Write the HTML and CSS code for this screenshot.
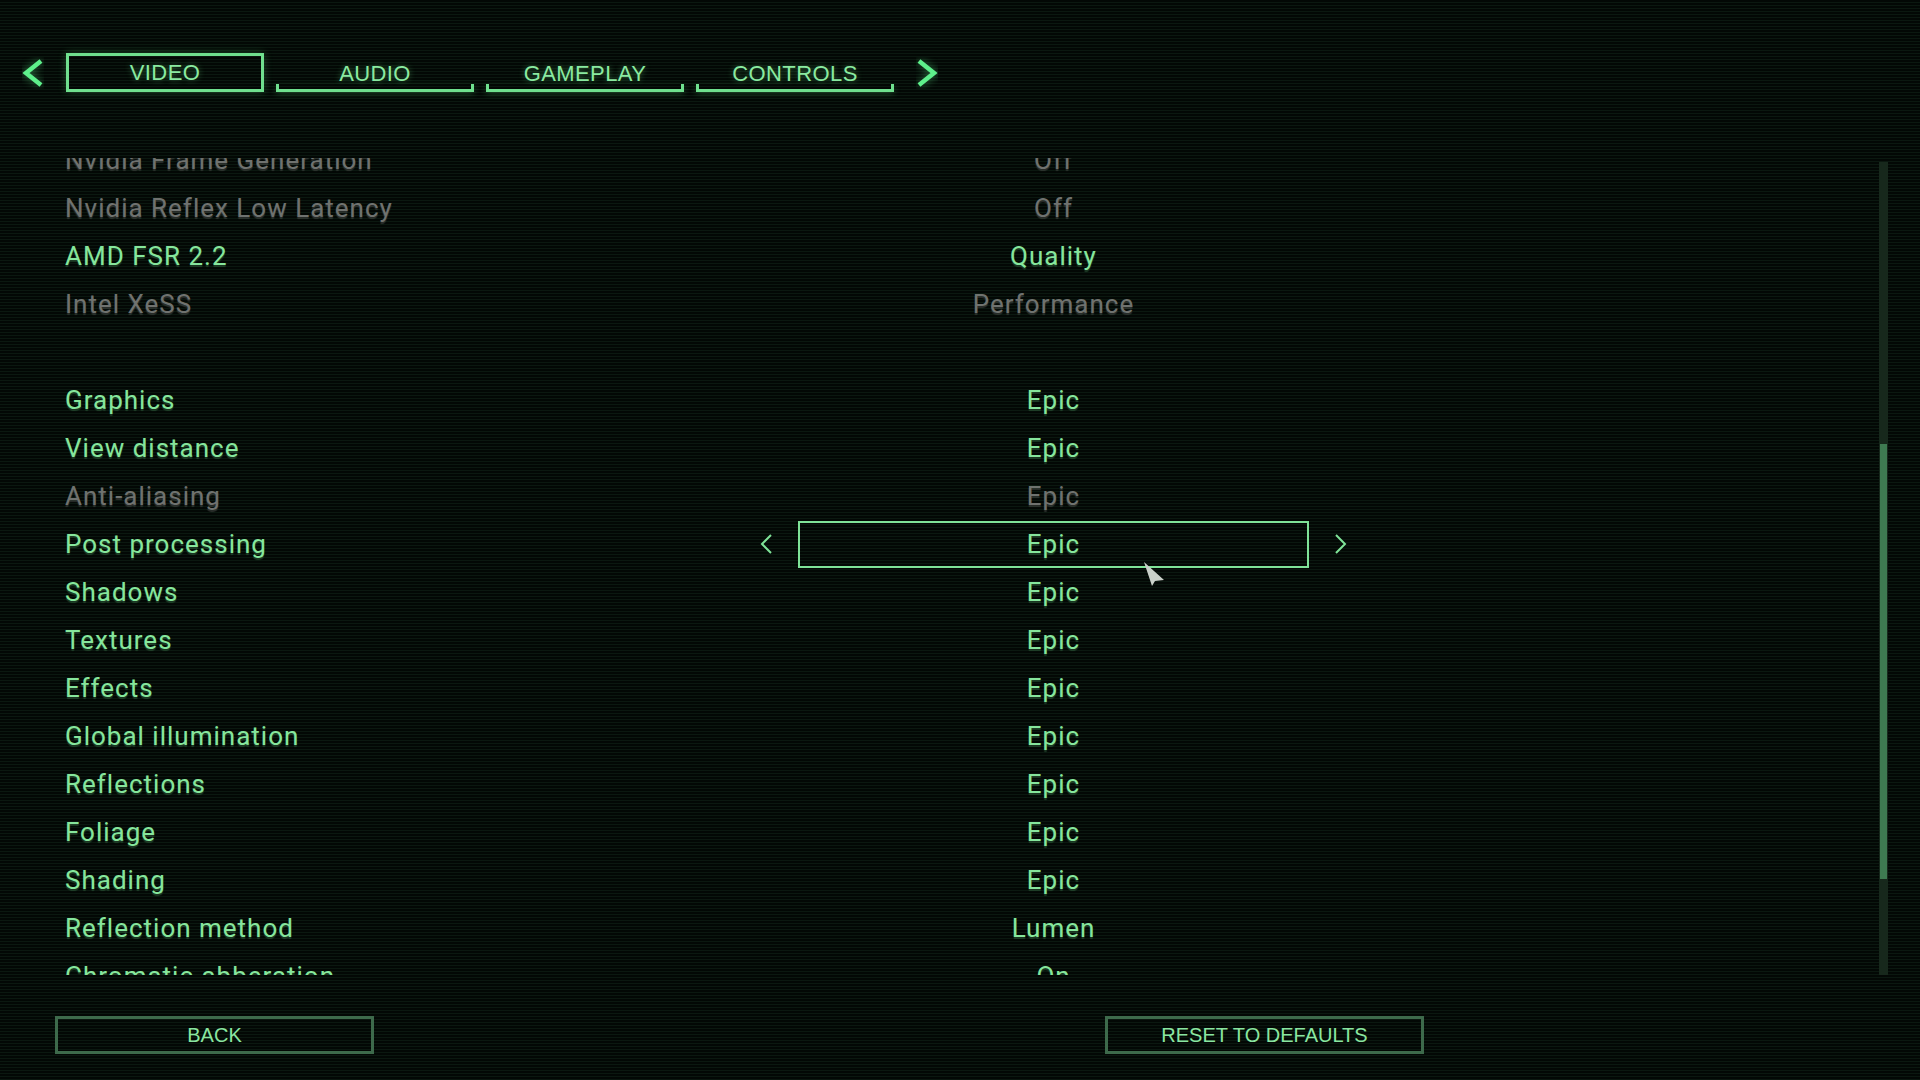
FILE: index.html
```html
<!DOCTYPE html>
<html lang="en">
  <head>
    <meta charset="UTF-8" />
    <meta name="viewport" content="width=device-width, initial-scale=1.0" />
    <title>Settings - Video</title>
    <link rel="stylesheet" href="styles.css">
  </head>
  <body>
    <nav class="tabbar">
      <span class="tab-arrow">
        <svg width="22" height="32" viewBox="0 0 22 32"><polyline points="19,4 4,16 19,28" /></svg>
      </span>
      <div class="tab active">VIDEO</div>
      <div class="tab">AUDIO</div>
      <div class="tab">GAMEPLAY</div>
      <div class="tab">CONTROLS</div>
      <span class="tab-arrow">
        <svg width="22" height="32" viewBox="0 0 22 32"><polyline points="3,4 18,16 3,28" /></svg>
      </span>
    </nav>

    <div class="settings">
      <div class="settings-list">
        <div class="rows">
          <div class="row disabled"><span class="label">Nvidia Frame Generation</span><div class="value"><span class="value-text">Off</span></div></div>
          <div class="row disabled"><span class="label">Nvidia Reflex Low Latency</span><div class="value"><span class="value-text">Off</span></div></div>
          <div class="row"><span class="label">AMD FSR 2.2</span><div class="value"><span class="value-text">Quality</span></div></div>
          <div class="row disabled"><span class="label">Intel XeSS</span><div class="value"><span class="value-text">Performance</span></div></div>
          <div class="row spacer"></div>
          <div class="row"><span class="label">Graphics</span><div class="value"><span class="value-text">Epic</span></div></div>
          <div class="row"><span class="label">View distance</span><div class="value"><span class="value-text">Epic</span></div></div>
          <div class="row disabled"><span class="label">Anti-aliasing</span><div class="value"><span class="value-text">Epic</span></div></div>
          <div class="row selected">
            <span class="label">Post processing</span>
            <div class="value">
              <svg class="step" width="12" height="22" viewBox="0 0 12 22"><polyline points="11,2 2,11 11,20" /></svg>
              <span class="value-text">Epic</span>
              <svg class="step" width="12" height="22" viewBox="0 0 12 22"><polyline points="1,2 10,11 1,20" /></svg>
            </div>
          </div>
          <div class="row"><span class="label">Shadows</span><div class="value"><span class="value-text">Epic</span></div></div>
          <div class="row"><span class="label">Textures</span><div class="value"><span class="value-text">Epic</span></div></div>
          <div class="row"><span class="label">Effects</span><div class="value"><span class="value-text">Epic</span></div></div>
          <div class="row"><span class="label">Global illumination</span><div class="value"><span class="value-text">Epic</span></div></div>
          <div class="row"><span class="label">Reflections</span><div class="value"><span class="value-text">Epic</span></div></div>
          <div class="row"><span class="label">Foliage</span><div class="value"><span class="value-text">Epic</span></div></div>
          <div class="row"><span class="label">Shading</span><div class="value"><span class="value-text">Epic</span></div></div>
          <div class="row"><span class="label">Reflection method</span><div class="value"><span class="value-text">Lumen</span></div></div>
          <div class="row"><span class="label">Chromatic abberation</span><div class="value"><span class="value-text">On</span></div></div>
        </div>
      </div>
      <div class="scrollbar"><div class="thumb"></div></div>
    </div>

    <footer class="footer">
      <button class="btn">BACK</button>
      <button class="btn reset">RESET TO DEFAULTS</button>
    </footer>

    <!-- mouse pointer -->
    <svg class="pointer" width="26" height="28" viewBox="0 0 26 28">
      <polygon points="1,1 21,19 12,20 9,25" />
    </svg>
  </body>
</html>
```

FILE: styles.css
```css
body {
  margin: 0;
  width: 1920px;
  height: 1080px;
  overflow: hidden;
  font-family: Roboto, "Liberation Sans", sans-serif;
  color: #86e69c;
  background-color: #050c07;
  background-image: repeating-linear-gradient(
    to bottom,
    #030805 0px,
    #030805 2px,
    #0b1810 2px,
    #0b1810 3px
  );
}

/* Top tabs */
.tabbar {
  display: flex;
  align-items: center;
  gap: 12px;
  height: 39px;
  margin-top: 53px;
  padding-left: 22px;
}
.tab-arrow {
  display: flex;
  width: 22px;
  justify-content: center;
}
.tab-arrow:first-child {
  margin-right: 10px;
}
.tab-arrow:last-child {
  margin-left: 10px;
}
.tab-arrow svg polyline {
  fill: none;
  stroke: #5ef08b;
  stroke-width: 4.5;
  filter: drop-shadow(0 0 4px rgba(94, 240, 139, 0.5));
}
.tab {
  position: relative;
  box-sizing: border-box;
  width: 198px;
  height: 39px;
  display: flex;
  align-items: center;
  justify-content: center;
  font-family: "Liberation Sans", Arial, sans-serif;
  font-size: 22px;
  letter-spacing: 0.4px;
  color: #8aeaa0;
  text-shadow: 0 0 6px rgba(110, 230, 140, 0.45);
  padding-top: 2px;
}
.tab::after {
  content: "";
  position: absolute;
  left: 0;
  right: 0;
  bottom: 0;
  height: 8px;
  border: 3px solid #6fe08e;
  border-top: none;
  box-sizing: border-box;
  box-shadow: 0 2px 6px rgba(90, 220, 120, 0.25);
}
.tab.active {
  border: 3px solid #6fe08e;
  box-shadow: 0 0 8px rgba(90, 220, 120, 0.3);
  padding-top: 0;
}
.tab.active::after {
  display: none;
}

/* Settings list */
.settings {
  display: flex;
  margin-top: 66px;
  height: 817px;
}
.settings-list {
  flex: 1;
  overflow: hidden;
}
.rows {
  margin-top: -22px;
}
.row {
  display: grid;
  grid-template-columns: 695px 587px;
  align-items: center;
  height: 48px;
  padding-left: 65px;
  font-size: 26px;
  letter-spacing: 1px;
  color: #86e69c;
  text-shadow: 0 2px 1px rgba(60, 120, 75, 0.45);
}
.row.disabled {
  color: #6f726f;
  text-shadow: 0 2px 1px rgba(70, 74, 70, 0.6);
}
.label {
  white-space: nowrap;
}
.value {
  display: flex;
  align-items: center;
  justify-content: center;
  gap: 26px;
  height: 100%;
}
.value-text {
  box-sizing: border-box;
  width: 512px;
  height: 47px;
  display: flex;
  align-items: center;
  justify-content: center;
  border: 2px solid transparent;
}
.row.selected .value-text {
  border-color: #7fe398;
}
.step polyline {
  fill: none;
  stroke: #7fe398;
  stroke-width: 2;
}

/* Scrollbar */
.scrollbar {
  width: 9px;
  height: 813px;
  margin-top: 4px;
  margin-right: 32px;
  background: #17281c;
  padding-top: 282px;
  box-sizing: border-box;
}
.thumb {
  height: 435px;
  margin: 0 1px;
  background: #3e7a51;
}

/* Bottom buttons */
.footer {
  display: flex;
  gap: 731px;
  margin-top: 41px;
  padding-left: 55px;
}
.btn {
  box-sizing: border-box;
  width: 319px;
  height: 38px;
  background: transparent;
  border: 3px solid #3d6a4b;
  color: #8ae6a0;
  font-family: "Liberation Sans", Arial, sans-serif;
  font-size: 20px;
  padding: 0;
}

.pointer {
  position: absolute;
  left: 1143px;
  top: 561px;
}
.pointer polygon {
  fill: #c9d0c9;
}
```
